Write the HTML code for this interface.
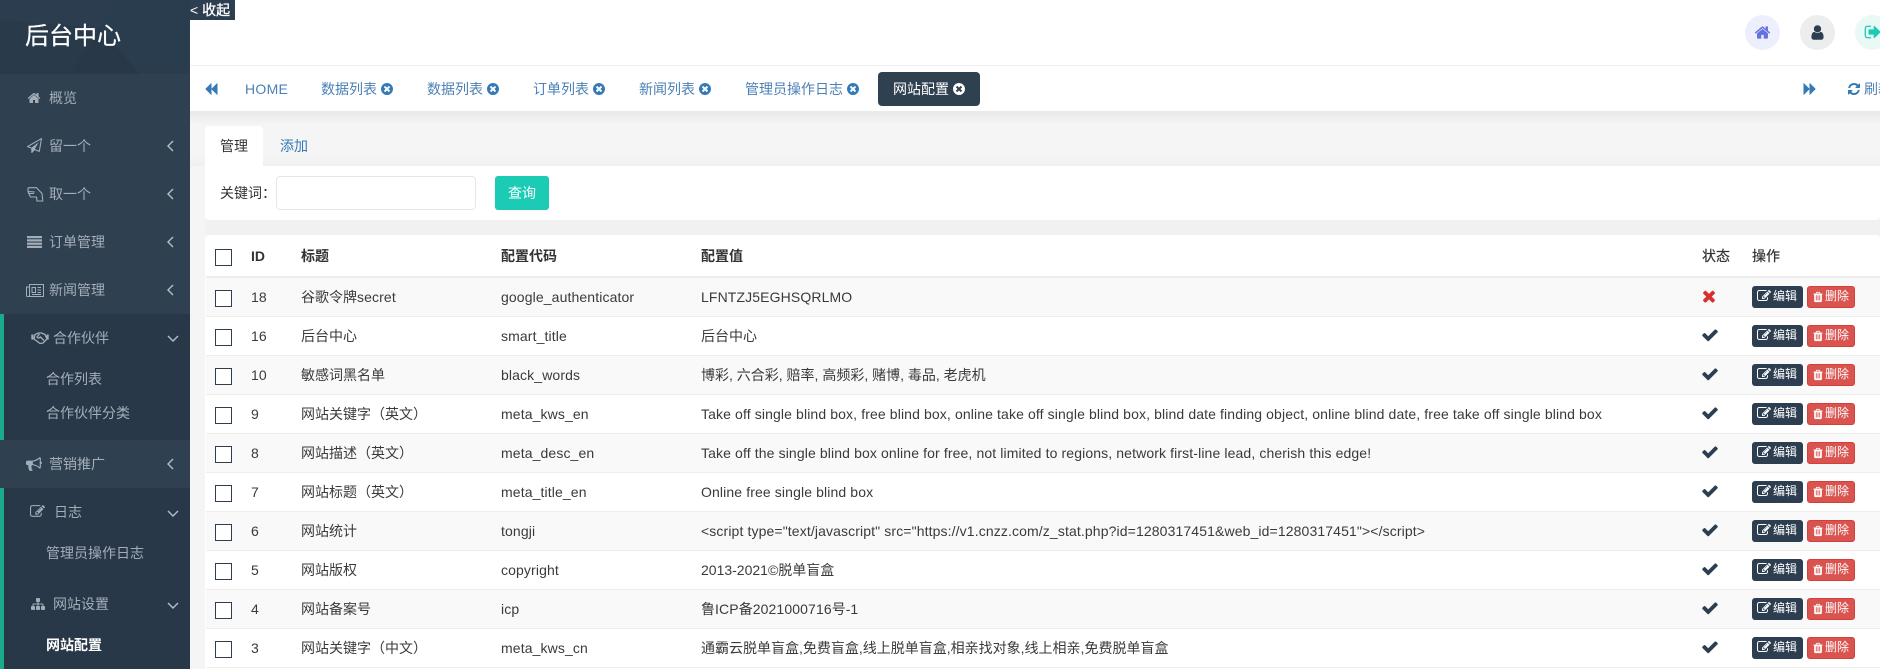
<!DOCTYPE html>
<html lang="zh"><head><meta charset="utf-8"><title>后台中心</title>
<style>
*{box-sizing:border-box}
html,body{margin:0;padding:0;width:1880px;height:669px;overflow:hidden;background:#f5f5f5;font:14px/20px "Liberation Sans","WenQuanYi Zen Hei","Noto Sans CJK SC",sans-serif;color:#333}
.a{position:absolute}
.t{position:absolute;white-space:nowrap}
.l,.r .t.l{letter-spacing:.12px}
svg{display:block}
svg.i{position:absolute;fill:currentColor}
#side{position:absolute;left:0;top:0;width:190px;height:669px;background:#2f4050;color:#a3aeb9;overflow:hidden}
#side .t{line-height:20px}
.sec{position:absolute;left:0;width:190px;background:#293848;border-left:4px solid #1aab8b}
.tab{position:absolute;top:79px;line-height:20px;color:#4b80b5;white-space:nowrap}
.tab svg{color:#337ab7}
.r{position:absolute;left:206px;width:1674px;height:39px;border-bottom:1px solid #eee;line-height:38px;background:#fff}
.r.o{background:#f9f9f9}
.r .t{top:0;line-height:38px;color:#3a3a3a}
.cb{position:absolute;left:9px;top:12px;width:17px;height:17px;border:1.3px solid #2c3e50;background:#fff}
.e,.d{position:absolute;top:8px;height:22px;border-radius:3px;color:#fff;font-size:12px;line-height:21px;white-space:nowrap}
.e{left:1546px;width:51px;background:#2c3e50;padding-left:21px}
.d{left:1601px;width:48px;background:#d9534f;border:1px solid #d43f3a;padding-left:17px;line-height:19px}
.e svg{left:5px;top:3px;color:#fff}
.d svg{left:4px;top:4px;color:#fff}
.ok{left:1495px;top:9px;color:#2c3e50}
.th{position:absolute;top:246px;font-weight:bold;color:#333;line-height:20px;white-space:nowrap}
</style></head><body>
<svg width="0" height="0" style="position:absolute"><defs>
<symbol id="check" viewBox="0 0 1792 1792"><path d="M1671 566q0 40-28 68l-724 724-136 136q-28 28-68 28t-68-28l-136-136-362-362q-28-28-28-68t28-68l136-136q28-28 68-28t68 28l294 295 656-657q28-28 68-28t68 28l136 136q28 28 28 68z"/></symbol>
<symbol id="times" viewBox="0 0 1792 1792"><path d="M1490 1322q0 40-28 68l-136 136q-28 28-68 28t-68-28l-294-294-294 294q-28 28-68 28t-68-28l-136-136q-28-28-28-68t28-68l294-294-294-294q-28-28-28-68t28-68l136-136q28-28 68-28t68 28l294 294 294-294q28-28 68-28t68 28l136 136q28 28 28 68t-28 68l-294 294 294 294q28 28 28 68z"/></symbol>
<symbol id="tc" viewBox="0 0 1792 1792"><path d="M1277 1122q0-26-19-45l-181-181 181-181q19-19 19-45 0-27-19-46l-90-90q-19-19-46-19-26 0-45 19l-181 181-181-181q-19-19-45-19-27 0-46 19l-90 90q-19 19-19 46 0 26 19 45l181 181-181 181q-19 19-19 45 0 27 19 46l90 90q19 19 46 19 26 0 45-19l181-181 181 181q19 19 45 19 27 0 46-19l90-90q19-19 19-46zm387-226q0 209-103 385.5t-279.5 279.5-385.5 103-385.5-103-279.5-279.5-103-385.5 103-385.5 279.5-279.5 385.5-103 385.5 103 279.5 279.5 103 385.5z"/></symbol>
<symbol id="home" viewBox="0 0 1792 1792"><path d="M1472 992v480q0 26-19 45t-45 19h-384v-384h-256v384h-384q-26 0-45-19t-19-45v-480q0-1 .5-3t.5-3l575-474 575 474q1 2 1 6zm223-69l-62 74q-8 9-21 11h-3q-13 0-21-7l-692-577-692 577q-12 8-24 7-13-2-21-11l-62-74q-8-10-7-23.5t11-21.5l719-599q32-26 76-26t76 26l244 204v-195q0-14 9-23t23-9h192q14 0 23 9t9 23v408l219 182q10 8 11 21.5t-7 23.5z"/></symbol>
<symbol id="user" viewBox="0 0 1792 1792"><path d="M1536 1399q0 109-62.5 187t-150.5 78h-854q-88 0-150.5-78t-62.5-187q0-85 8.5-160.5t31.5-152 58.5-131 94-89 134.5-34.5q131 128 313 128t313-128q76 0 134.5 34.5t94 89 58.5 131 31.5 152 8.5 160.5zm-256-887q0 159-112.5 271.5t-271.5 112.5-271.5-112.5-112.5-271.5 112.5-271.5 271.5-112.5 271.5 112.5 112.5 271.5z"/></symbol>
<symbol id="back" viewBox="0 0 1792 1792"><path d="M1683 141q19-19 32-13t13 32v1472q0 26-13 32t-32-13l-710-710q-9-9-13-19v710q0 26-13 32t-32-13l-710-710q-19-19-19-45t19-45l710-710q19-19 32-13t13 32v710q4-10 13-19z"/></symbol>
<symbol id="fwd" viewBox="0 0 1792 1792"><path d="M109 1651q-19 19-32 13t-13-32v-1472q0-26 13-32t32 13l710 710q9 9 13 19v-710q0-26 13-32t32 13l710 710q19 19 19 45t-19 45l-710 710q-19 19-32 13t-13-32v-710q-4 10-13 19z"/></symbol>
<symbol id="refresh" viewBox="0 0 1792 1792"><path d="M1639 1056q0 5-1 7-64 268-268 434.5t-478 166.5q-146 0-282.5-55t-243.5-157l-129 129q-19 19-45 19t-45-19-19-45v-448q0-26 19-45t45-19h448q26 0 45 19t19 45-19 45l-137 137q71 66 161 102t187 36q134 0 250-65t186-179q11-17 53-117 8-23 30-23h192q13 0 22.5 9.500t9.500 22.500zm25-800v448q0 26-19 45t-45 19h-448q-26 0-45-19t-19-45 19-45l138-138q-148-137-349-137-134 0-250 65t-186 179q-11 17-53 117-8 23-30 23h-199q-13 0-22.500-9.500t-9.500-22.500v-7q65-268 270-434.500t480-166.500q146 0 284 55.500t245 156.500l130-129q19-19 45-19t45 19 19 45z"/></symbol>
<symbol id="edit" viewBox="0 0 1792 1792"><path d="M888 1184l116-116-152-152-116 116v56h96v96h56zm440-720q-16-16-33 1l-350 350q-17 17-1 33t33-1l350-350q17-17 1-33zm80 594v190q0 119-84.500 203.500t-203.500 84.500h-832q-119 0-203.500-84.500t-84.500-203.500v-832q0-119 84.500-203.500t203.500-84.500h832q63 0 117 25 15 7 18 23 3 17-9 29l-49 49q-14 14-32 8-23-6-45-6h-832q-66 0-113 47t-47 113v832q0 66 47 113t113 47h832q66 0 113-47t47-113v-126q0-13 9-22l64-64q15-15 35-7t20 29zm-96-738l288 288-672 672h-288v-288zm444 132l-92 92-288-288 92-92q28-28 68-28t68 28l152 152q28 28 28 68t-28 68z"/></symbol>
<symbol id="trash" viewBox="0 0 1792 1792"><path d="M704 1376v-704q0-14-9-23t-23-9h-64q-14 0-23 9t-9 23v704q0 14 9 23t23 9h64q14 0 23-9t9-23zm256 0v-704q0-14-9-23t-23-9h-64q-14 0-23 9t-9 23v704q0 14 9 23t23 9h64q14 0 23-9t9-23zm256 0v-704q0-14-9-23t-23-9h-64q-14 0-23 9t-9 23v704q0 14 9 23t23 9h64q14 0 23-9t9-23zm-544-992h448l-48-117q-7-9-17-11h-317q-10 2-17 11zm928 32v64q0 14-9 23t-23 9h-96v948q0 83-47 143.500t-113 60.500h-832q-66 0-113-58.500t-47-141.500v-952h-96q-14 0-23-9t-9-23v-64q0-14 9-23t23-9h309l70-167q15-37 54-63t79-26h320q40 0 79 26t54 63l70 167h309q14 0 23 9t9 23z"/></symbol>
<symbol id="out" viewBox="0 0 1792 1792"><path d="M704 1440q0 4 1 20t.5 26.500-3 23.500-10 19.500-20.500 6.500h-320q-119 0-203.500-84.500t-84.500-203.500v-704q0-119 84.500-203.500t203.500-84.500h320q13 0 22.500 9.500t9.500 22.500q0 4 1 20t.5 26.500-3 23.500-10 19.500-20.500 6.500h-320q-66 0-113 47t-47 113v704q0 66 47 113t113 47h312l11.500 1 11.500 3 8 5.500 7 9 2 13.500zm928-544q0 26-19 45l-544 544q-19 19-45 19t-45-19-19-45v-288h-448q-26 0-45-19t-19-45v-384q0-26 19-45t45-19h448v-288q0-26 19-45t45-19 45 19l544 544q19 19 19 45z"/></symbol>
<symbol id="plane" viewBox="0 0 1792 1792"><path d="M1764 11q33 24 27 64l-256 1536q-5 29-32 45-14 8-31 8-11 0-24-5l-527-215-298 327q-18 21-47 21-14 0-23-4-19-7-30-23.500t-11-36.500v-452l-472-193q-37-14-40-55-3-39 32-59l1664-960q35-21 68 2zm-342 1499l221-1323-1434 827 336 137 863-639-478 797z"/></symbol>
<symbol id="horn" viewBox="0 0 1792 1792"><path d="M1664 640q53 0 90.500 37.500t37.500 90.500-37.500 90.500-90.500 37.500v384q0 52-38 90t-90 38q-417-347-812-380-58 19-91 66t-31 100.500 40 92.500q-20 33-23 65.500t6 58 33.500 55 48 50 61.500 50.500q-29 58-111.500 83t-168.500 11.500-132-55.500q-7-23-29.500-87.500t-32-94.500-23-89-15-101 3.500-98.500 22-110.500h-122q-66 0-113-47t-47-113v-192q0-66 47-113t113-47h480q435 0 896-384 52 0 90 38t38 90v384zm-128 604v-954q-394 302-768 343v270q377 42 768 341z"/></symbol>
<symbol id="site" viewBox="0 0 1792 1792"><path d="M1792 1248v320q0 40-28 68t-68 28h-320q-40 0-68-28t-28-68v-320q0-40 28-68t68-28h96v-192h-512v192h96q40 0 68 28t28 68v320q0 40-28 68t-68 28h-320q-40 0-68-28t-28-68v-320q0-40 28-68t68-28h96v-192h-512v192h96q40 0 68 28t28 68v320q0 40-28 68t-68 28h-320q-40 0-68-28t-28-68v-320q0-40 28-68t68-28h96v-192q0-52 38-90t90-38h512v-192h-96q-40 0-68-28t-28-68v-320q0-40 28-68t68-28h320q40 0 68 28t28 68v320q0 40-28 68t-68 28h-96v192h512q52 0 90 38t38 90v192h96q40 0 68 28t28 68z"/></symbol>
</defs></svg>

<div id="side">
<svg class="a" style="left:0;top:0" width="190" height="74"><rect width="190" height="74" fill="#293a4b"/><polygon points="0,0 118,0 100,28 0,20" fill="#2b3d4f"/><polygon points="118,0 190,0 190,74 140,74 100,28" fill="#2a3d4f"/><polygon points="100,28 140,74 70,74" fill="#283849"/></svg>
<div class="t" style="left:25px;top:20px;font-size:24px;line-height:34px;color:#fff;-webkit-text-stroke:.2px #fff">后台中心</div>

<svg class="i" style="left:27px;top:91px" width="14" height="14" viewBox="0 0 1792 1792"><use href="#home"/></svg>
<div class="t" style="left:49px;top:88px">概览</div>

<svg class="i" style="left:27px;top:138px" width="15" height="15" viewBox="0 0 1792 1792"><use href="#plane"/></svg>
<div class="t" style="left:49px;top:136px">留一个</div>
<svg class="a" style="left:166px;top:140px" width="9" height="12" fill="none" stroke="#b6bfc8" stroke-width="1.400"><path d="M7 1L2 6l5 5"/></svg>

<svg class="a" style="left:27px;top:187px" width="17" height="15" viewBox="0 0 17 15" fill="none" stroke="#a3aeb9" stroke-width="1.100"><path d="M2 .7h7.500l5.500 5.800.8 7.500h-5.800l-.5-4H3.500L1.800 6.500 1 4.500V1.700C1 1 1.400.7 2 .7zM1 4.500l7 .5M2 6.500h5" stroke-linejoin="round"/></svg>
<div class="t" style="left:49px;top:184px">取一个</div>
<svg class="a" style="left:166px;top:188px" width="9" height="12" fill="none" stroke="#b6bfc8" stroke-width="1.400"><path d="M7 1L2 6l5 5"/></svg>

<svg class="a" style="left:27px;top:236px" width="15" height="12" fill="#a3aeb9"><rect x="0" y="0" width="15" height="2.200"/><rect x="0" y="3.300" width="15" height="2.200"/><rect x="0" y="6.600" width="15" height="2.200"/><rect x="0" y="9.800" width="15" height="2.200"/></svg>
<div class="t" style="left:49px;top:232px">订单管理</div>
<svg class="a" style="left:166px;top:236px" width="9" height="12" fill="none" stroke="#b6bfc8" stroke-width="1.400"><path d="M7 1L2 6l5 5"/></svg>

<svg class="a" style="left:26px;top:284px" width="18" height="13" viewBox="0 0 18 13" fill="none" stroke="#a3aeb9" stroke-width="1"><rect x="3.500" y=".5" width="14" height="12"/><path d="M3.500 3H.5v8.500c0 .6.500 1 1 1h2M6 3.500h3.500v5H6zM11.500 3.500H15M11.500 6H15M11.500 8.500H15M6 10.500h9"/></svg>
<div class="t" style="left:49px;top:280px">新闻管理</div>
<svg class="a" style="left:166px;top:284px" width="9" height="12" fill="none" stroke="#b6bfc8" stroke-width="1.400"><path d="M7 1L2 6l5 5"/></svg>

<div class="sec" style="top:314px;height:126px"></div>
<svg class="a" style="left:31px;top:332px" width="18" height="12" viewBox="0 0 18 12" fill="none" stroke="#a3aeb9" stroke-width="1.300"><path d="M4 2.500L7.500 1h3L14 2.500 16 7l-4 4-3 .5L5 8.500 3 7zM8.500 2L6 5c1 1.500 2.500 1 3.500 0l3.500 3.500"/><rect x=".3" y="2.500" width="2.200" height="5" fill="#a3aeb9" stroke="none"/><rect x="15.500" y="2.500" width="2.200" height="5" fill="#a3aeb9" stroke="none"/></svg>
<div class="t" style="left:53px;top:328px">合作伙伴</div>
<svg class="a" style="left:167px;top:334px" width="12" height="9" fill="none" stroke="#b6bfc8" stroke-width="1.400"><path d="M1 2l5 5 5-5"/></svg>
<div class="t" style="left:46px;top:369px">合作列表</div>
<div class="t" style="left:46px;top:403px">合作伙伴分类</div>

<svg class="i" style="left:26px;top:456px" width="16" height="16" viewBox="0 0 1792 1792"><use href="#horn"/></svg>
<div class="t" style="left:49px;top:454px">营销推广</div>
<svg class="a" style="left:166px;top:458px" width="9" height="12" fill="none" stroke="#b6bfc8" stroke-width="1.400"><path d="M7 1L2 6l5 5"/></svg>

<div class="sec" style="top:488px;height:181px"></div>
<svg class="i" style="left:30px;top:504px" width="15" height="15" viewBox="0 0 1792 1792"><use href="#edit"/></svg>
<div class="t" style="left:54px;top:502px">日志</div>
<svg class="a" style="left:167px;top:509px" width="12" height="9" fill="none" stroke="#b6bfc8" stroke-width="1.400"><path d="M1 2l5 5 5-5"/></svg>
<div class="t" style="left:46px;top:543px">管理员操作日志</div>
<svg class="i" style="left:31px;top:597px" width="14" height="14" viewBox="0 0 1792 1792"><use href="#site"/></svg>
<div class="t" style="left:53px;top:594px">网站设置</div>
<svg class="a" style="left:167px;top:601px" width="12" height="9" fill="none" stroke="#b6bfc8" stroke-width="1.400"><path d="M1 2l5 5 5-5"/></svg>
<div class="t" style="left:46px;top:635px;color:#fff;font-weight:bold">网站配置</div>
</div>

<!-- top bar -->
<div class="a" style="left:190px;top:0;width:1690px;height:65px;background:#fff"></div>
<div class="a" style="left:190px;top:65px;width:1690px;height:1px;background:#eee"></div>
<div class="a" style="left:190px;top:0;width:45px;height:20px;background:#2c3e50"></div>
<div class="t" style="left:190px;top:0;font-size:14px;line-height:20px;color:#fff">&lt; <span style="-webkit-text-stroke:.3px #fff">收起</span></div>
<div class="a" style="left:1745px;top:15px;width:35px;height:35px;border-radius:50%;background:#eeeffd"></div>
<svg class="i" style="left:1754px;top:24px;color:#6571e0" width="17" height="17" viewBox="0 0 1792 1792"><use href="#home"/></svg>
<div class="a" style="left:1800px;top:15px;width:35px;height:35px;border-radius:50%;background:#ebedef"></div>
<svg class="i" style="left:1809px;top:24px;color:#2c3e50" width="17" height="17" viewBox="0 0 1792 1792"><use href="#user"/></svg>
<div class="a" style="left:1855px;top:15px;width:35px;height:35px;border-radius:50%;background:#e8f9f6"></div>
<svg class="i" style="left:1864px;top:23px;color:#1ccbb4" width="18" height="18" viewBox="0 0 1792 1792"><use href="#out"/></svg>

<!-- tabs -->
<div class="a" style="left:190px;top:66px;width:1690px;height:45px;background:#fff"></div>
<div class="a" style="left:190px;top:111px;width:1690px;height:14px;background:linear-gradient(#e9e9e9,#f5f5f5)"></div>
<div class="a" style="left:190px;top:156px;width:1690px;height:10px;background:linear-gradient(#f5f5f5,#f0f0f0)"></div>
<svg class="i" style="left:204px;top:82px;color:#337ab7" width="14" height="14" viewBox="0 0 1792 1792"><use href="#back"/></svg>
<div class="tab" style="left:245px;letter-spacing:.3px">HOME</div>
<div class="tab" style="left:321px">数据列表<svg class="i" style="left:59px;top:3px" width="14" height="14" viewBox="0 0 1792 1792"><use href="#tc"/></svg></div>
<div class="tab" style="left:427px">数据列表<svg class="i" style="left:59px;top:3px" width="14" height="14" viewBox="0 0 1792 1792"><use href="#tc"/></svg></div>
<div class="tab" style="left:533px">订单列表<svg class="i" style="left:59px;top:3px" width="14" height="14" viewBox="0 0 1792 1792"><use href="#tc"/></svg></div>
<div class="tab" style="left:639px">新闻列表<svg class="i" style="left:59px;top:3px" width="14" height="14" viewBox="0 0 1792 1792"><use href="#tc"/></svg></div>
<div class="tab" style="left:745px">管理员操作日志<svg class="i" style="left:101px;top:3px" width="14" height="14" viewBox="0 0 1792 1792"><use href="#tc"/></svg></div>
<div class="a" style="left:878px;top:72px;width:102px;height:34px;border-radius:4px;background:#2f4050"></div>
<div class="tab" style="left:893px;color:#fff">网站配置<svg class="i" style="left:59px;top:3px;color:#fff" width="14" height="14" viewBox="0 0 1792 1792"><use href="#tc"/></svg></div>
<svg class="i" style="left:1803px;top:82px;color:#337ab7" width="14" height="14" viewBox="0 0 1792 1792"><use href="#fwd"/></svg>
<svg class="i" style="left:1847px;top:82px;color:#337ab7" width="14" height="14" viewBox="0 0 1792 1792"><use href="#refresh"/></svg>
<div class="tab" style="left:1864px">刷新</div>

<!-- sub tabs -->
<div class="a" style="left:205px;top:126px;width:58px;height:41px;background:#fff;border-radius:4px 4px 0 0"></div>
<div class="t" style="left:220px;top:136px">管理</div>
<div class="t" style="left:280px;top:136px;color:#337ab7">添加</div>
<div class="a" style="left:205px;top:166px;width:1675px;height:54px;background:#fff;border-radius:0 0 4px 4px"></div>
<div class="a" style="left:190px;top:220px;width:1690px;height:15px;background:#f1f1f1"></div>
<div class="a" style="left:190px;top:220px;width:15px;height:449px;background:#f5f5f5"></div>
<div class="t" style="left:220px;top:183px;line-height:20px">关键词：</div>
<div class="a" style="left:276px;top:176px;width:200px;height:34px;background:#fff;border:1px solid #e4e6ee;border-radius:4px"></div>
<div class="a" style="left:495px;top:176px;width:54px;height:34px;background:#1ccbb4;border-radius:3px;color:#fff;text-align:center;line-height:34px">查询</div>

<!-- table -->
<div class="a" style="left:205px;top:235px;width:1675px;height:434px;background:#fff;border-radius:4px 4px 0 0"></div>
<div class="a" style="left:206px;top:276px;width:1674px;height:2px;background:#eee"></div>
<div class="cb" style="left:215px;top:249px"></div>
<div class="th" style="left:251px">ID</div>
<div class="th" style="left:301px">标题</div>
<div class="th" style="left:501px">配置代码</div>
<div class="th" style="left:701px">配置值</div>
<div class="th" style="left:1702px;font-weight:normal;-webkit-text-stroke:.2px #333">状态</div>
<div class="th" style="left:1752px;font-weight:normal;-webkit-text-stroke:.2px #333">操作</div>

<div class="r o" style="top:278px"><div class="cb"></div><div class="t l" style="left:45px">18</div><div class="t" style="left:95px">谷歌令牌<span class="l">secret</span></div><div class="t l" style="left:295px">google_authenticator</div><div class="t l" style="left:495px">LFNTZJ5EGHSQRLMO</div><svg class="i" style="left:1494px;top:9px;color:#d9302c" width="18" height="18" viewBox="0 0 1792 1792"><use href="#times"/></svg><div class="e"><svg class="i" width="14" height="14" viewBox="0 0 1792 1792"><use href="#edit"/></svg>编辑</div><div class="d"><svg class="i" width="12" height="12" viewBox="0 0 1792 1792"><use href="#trash"/></svg>删除</div></div>
<div class="r" style="top:317px"><div class="cb"></div><div class="t l" style="left:45px">16</div><div class="t" style="left:95px">后台中心</div><div class="t l" style="left:295px">smart_title</div><div class="t" style="left:495px">后台中心</div><svg class="i ok" width="18" height="18" viewBox="0 0 1792 1792"><use href="#check"/></svg><div class="e"><svg class="i" width="14" height="14" viewBox="0 0 1792 1792"><use href="#edit"/></svg>编辑</div><div class="d"><svg class="i" width="12" height="12" viewBox="0 0 1792 1792"><use href="#trash"/></svg>删除</div></div>
<div class="r o" style="top:356px"><div class="cb"></div><div class="t l" style="left:45px">10</div><div class="t" style="left:95px">敏感词黑名单</div><div class="t l" style="left:295px">black_words</div><div class="t" style="left:495px">博彩, 六合彩, 赔率, 高频彩, 赌博, 毒品, 老虎机</div><svg class="i ok" width="18" height="18" viewBox="0 0 1792 1792"><use href="#check"/></svg><div class="e"><svg class="i" width="14" height="14" viewBox="0 0 1792 1792"><use href="#edit"/></svg>编辑</div><div class="d"><svg class="i" width="12" height="12" viewBox="0 0 1792 1792"><use href="#trash"/></svg>删除</div></div>
<div class="r" style="top:395px"><div class="cb"></div><div class="t" style="left:45px">9</div><div class="t" style="left:95px">网站关键字（英文）</div><div class="t l" style="left:295px">meta_kws_en</div><div class="t l" style="left:495px">Take off single blind box, free blind box, online take off single blind box, blind date finding object, online blind date, free take off single blind box</div><svg class="i ok" width="18" height="18" viewBox="0 0 1792 1792"><use href="#check"/></svg><div class="e"><svg class="i" width="14" height="14" viewBox="0 0 1792 1792"><use href="#edit"/></svg>编辑</div><div class="d"><svg class="i" width="12" height="12" viewBox="0 0 1792 1792"><use href="#trash"/></svg>删除</div></div>
<div class="r o" style="top:434px"><div class="cb"></div><div class="t" style="left:45px">8</div><div class="t" style="left:95px">网站描述（英文）</div><div class="t l" style="left:295px">meta_desc_en</div><div class="t l" style="left:495px">Take off the single blind box online for free, not limited to regions, network first-line lead, cherish this edge!</div><svg class="i ok" width="18" height="18" viewBox="0 0 1792 1792"><use href="#check"/></svg><div class="e"><svg class="i" width="14" height="14" viewBox="0 0 1792 1792"><use href="#edit"/></svg>编辑</div><div class="d"><svg class="i" width="12" height="12" viewBox="0 0 1792 1792"><use href="#trash"/></svg>删除</div></div>
<div class="r" style="top:473px"><div class="cb"></div><div class="t" style="left:45px">7</div><div class="t" style="left:95px">网站标题（英文）</div><div class="t l" style="left:295px">meta_title_en</div><div class="t l" style="left:495px">Online free single blind box</div><svg class="i ok" width="18" height="18" viewBox="0 0 1792 1792"><use href="#check"/></svg><div class="e"><svg class="i" width="14" height="14" viewBox="0 0 1792 1792"><use href="#edit"/></svg>编辑</div><div class="d"><svg class="i" width="12" height="12" viewBox="0 0 1792 1792"><use href="#trash"/></svg>删除</div></div>
<div class="r o" style="top:512px"><div class="cb"></div><div class="t" style="left:45px">6</div><div class="t" style="left:95px">网站统计</div><div class="t l" style="left:295px">tongji</div><div class="t l" style="left:495px">&lt;script type="text/javascript" src="https://v1.cnzz.com/z_stat.php?id=1280317451&amp;web_id=1280317451"&gt;&lt;/script&gt;</div><svg class="i ok" width="18" height="18" viewBox="0 0 1792 1792"><use href="#check"/></svg><div class="e"><svg class="i" width="14" height="14" viewBox="0 0 1792 1792"><use href="#edit"/></svg>编辑</div><div class="d"><svg class="i" width="12" height="12" viewBox="0 0 1792 1792"><use href="#trash"/></svg>删除</div></div>
<div class="r" style="top:551px"><div class="cb"></div><div class="t" style="left:45px">5</div><div class="t" style="left:95px">网站版权</div><div class="t l" style="left:295px">copyright</div><div class="t" style="left:495px">2013-2021©脱单盲盒</div><svg class="i ok" width="18" height="18" viewBox="0 0 1792 1792"><use href="#check"/></svg><div class="e"><svg class="i" width="14" height="14" viewBox="0 0 1792 1792"><use href="#edit"/></svg>编辑</div><div class="d"><svg class="i" width="12" height="12" viewBox="0 0 1792 1792"><use href="#trash"/></svg>删除</div></div>
<div class="r o" style="top:590px"><div class="cb"></div><div class="t" style="left:45px">4</div><div class="t" style="left:95px">网站备案号</div><div class="t l" style="left:295px">icp</div><div class="t" style="left:495px">鲁<span class="l">ICP</span>备<span class="l">2021000716</span>号-1</div><svg class="i ok" width="18" height="18" viewBox="0 0 1792 1792"><use href="#check"/></svg><div class="e"><svg class="i" width="14" height="14" viewBox="0 0 1792 1792"><use href="#edit"/></svg>编辑</div><div class="d"><svg class="i" width="12" height="12" viewBox="0 0 1792 1792"><use href="#trash"/></svg>删除</div></div>
<div class="r" style="top:629px"><div class="cb"></div><div class="t" style="left:45px">3</div><div class="t" style="left:95px">网站关键字（中文）</div><div class="t l" style="left:295px">meta_kws_cn</div><div class="t" style="left:495px">通霸云脱单盲盒,免费盲盒,线上脱单盲盒,相亲找对象,线上相亲,免费脱单盲盒</div><svg class="i ok" width="18" height="18" viewBox="0 0 1792 1792"><use href="#check"/></svg><div class="e"><svg class="i" width="14" height="14" viewBox="0 0 1792 1792"><use href="#edit"/></svg>编辑</div><div class="d"><svg class="i" width="12" height="12" viewBox="0 0 1792 1792"><use href="#trash"/></svg>删除</div></div>
</body></html>
